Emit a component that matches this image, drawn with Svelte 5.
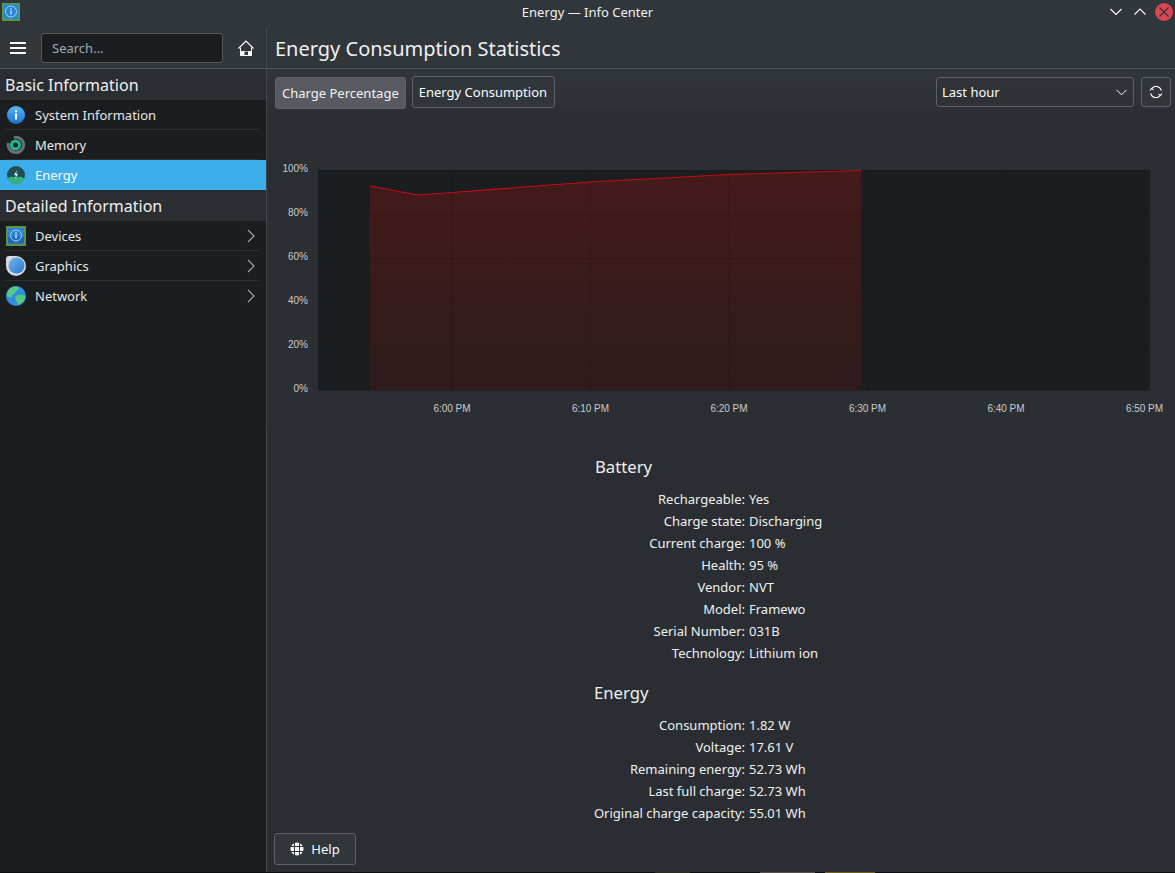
<script>
  const yTicks = [
    { y: 170, label: '100%' }, { y: 214, label: '80%' }, { y: 258, label: '60%' },
    { y: 302, label: '40%' }, { y: 346, label: '20%' }, { y: 390, label: '0%' }
  ];
  const xTicks = [
    { x: 452, label: '6:00 PM' }, { x: 590.5, label: '6:10 PM' }, { x: 729, label: '6:20 PM' },
    { x: 867.5, label: '6:30 PM' }, { x: 1006, label: '6:40 PM' }, { x: 1144.5, label: '6:50 PM' }
  ];
  const battery = [
    ['Rechargeable:', 'Yes'], ['Charge state:', 'Discharging'], ['Current charge:', '100 %'],
    ['Health:', '95 %'], ['Vendor:', 'NVT'], ['Model:', 'Framewo'],
    ['Serial Number:', '031B'], ['Technology:', 'Lithium ion']
  ];
  const energy = [
    ['Consumption:', '1.82 W'], ['Voltage:', '17.61 V'], ['Remaining energy:', '52.73 Wh'],
    ['Last full charge:', '52.73 Wh'], ['Original charge capacity:', '55.01 Wh']
  ];
  const line = '370,186 417.5,195 452,192.5 590,182 729,174.5 861,170.5';
</script>

<div class="window">
  <header class="titlebar">
    <svg class="appicon" width="20" height="20" viewBox="0 0 20 20">
      <rect x="1" y="1" width="18" height="18" fill="#5b9a3e" />
      <rect x="2.500" y="2.500" width="15" height="14.500" fill="#2c86d8" />
      <circle cx="10" cy="9.500" r="5.500" fill="none" stroke="#9fd4fa" />
      <rect x="9.400" y="8.500" width="1.300" height="4" fill="#cfe9fd" />
      <rect x="9.400" y="6.300" width="1.300" height="1.300" fill="#cfe9fd" />
    </svg>
    <span class="wintitle">Energy — Info Center</span>
    <div class="winbtns">
      <svg width="14" height="14" viewBox="0 0 14 14"><path d="M1.500 4 7 9.500 12.500 4" fill="none" stroke="#fcfcfc" stroke-width="1.100" /></svg>
      <svg width="14" height="14" viewBox="0 0 14 14"><path d="M1.500 9.500 7 4l5.500 5.500" fill="none" stroke="#fcfcfc" stroke-width="1.100" /></svg>
      <svg class="close" width="18" height="18" viewBox="0 0 18 18"><circle cx="9" cy="9" r="9" fill="#da4453" /><path d="M4.500 4.500l9 9M13.500 4.500l-9 9" stroke="#31363b" stroke-width="1.200" /></svg>
    </div>
  </header>

  <div class="body">
    <aside class="sidebar">
      <div class="toolbar">
        <svg width="16" height="12" viewBox="0 0 16 12"><path d="M0 1h16M0 6h16M0 11h16" stroke="#fcfcfc" stroke-width="2" /></svg>
        <div class="search">Search...</div>
        <svg class="home" width="16" height="16" viewBox="0 0 16 16">
          <path d="M.5 8.500 8 1l7.500 7.500" fill="none" stroke="#fcfcfc" stroke-width="1.200" />
          <path d="M2.500 7.500V15.500h11V7.500" fill="none" stroke="#fcfcfc" stroke-width="1" />
          <path d="M2.500 11h11v5h-3.500v-4.500H6.500V16H2.500z" fill="#fcfcfc" />
        </svg>
      </div>
      <div class="list">
        <div class="section">Basic Information</div>
        <div class="item">
          <svg width="20" height="20" viewBox="0 0 20 20">
            <defs><linearGradient id="blue" x1="0" y1="0" x2="0" y2="1"><stop offset="0" stop-color="#5cb8f6" /><stop offset="1" stop-color="#1a6fd0" /></linearGradient></defs>
            <circle cx="10" cy="10" r="9" fill="url(#blue)" />
            <rect x="9" y="8.500" width="2" height="6" fill="#fff" /><rect x="9" y="5.200" width="2" height="2" fill="#fff" />
          </svg>
          <span>System Information</span>
        </div>
        <div class="item">
          <svg width="20" height="20" viewBox="0 0 20 20">
            <path d="M8 2.500A7.700 7.700 0 1 1 2.500 8" fill="none" stroke="#6a6f74" stroke-width="3" />
            <circle cx="9.500" cy="10" r="4" fill="#1e2326" stroke="#1db894" stroke-width="3" />
          </svg>
          <span>Memory</span>
        </div>
        <div class="item selected">
          <svg width="20" height="20" viewBox="0 0 20 20">
            <circle cx="10" cy="10" r="9" fill="#1d4f55" />
            <path d="M1.700 13.500c3-3 5-1.500 8-1.500s5-1.500 8.600 1.500A9 9 0 0 1 1.700 13.500z" fill="#35b27a" />
            <path d="M11 5 8 10.200h2L9 14l3.200-5.200h-2z" fill="#e8f5e4" />
          </svg>
          <span>Energy</span>
        </div>
        <div class="section">Detailed Information</div>
        <div class="item">
          <svg width="20" height="20" viewBox="0 0 20 20">
            <rect width="20" height="20" fill="#5d9440" />
            <rect x="2" y="2" width="16" height="15.500" fill="#2b83d6" />
            <rect x="2" y="11" width="16" height="6.500" fill="#1f66b8" />
            <circle cx="10" cy="9.500" r="5.500" fill="none" stroke="#9fd4fa" />
            <rect x="9.300" y="8.500" width="1.400" height="4" fill="#cfe9fd" /><rect x="9.300" y="6.300" width="1.400" height="1.400" fill="#cfe9fd" />
          </svg>
          <span>Devices</span>
          <svg class="chev" width="8" height="14" viewBox="0 0 8 14"><path d="M1 1l6 6-6 6" fill="none" stroke="#a1a9b1" stroke-width="1.100" /></svg>
        </div>
        <div class="item">
          <svg width="20" height="20" viewBox="0 0 20 20">
            <defs><linearGradient id="gfx" x1="0" y1="0" x2="1" y2="1"><stop offset="0" stop-color="#6fb6ee" /><stop offset="1" stop-color="#2a78cf" /></linearGradient></defs>
            <path d="M3 0h7a10 10 0 0 1 0 20 10 10 0 0 1-10-10V3a3 3 0 0 1 3-3z" fill="#d5dade" />
            <circle cx="10.500" cy="9.500" r="8" fill="url(#gfx)" />
          </svg>
          <span>Graphics</span>
          <svg class="chev" width="8" height="14" viewBox="0 0 8 14"><path d="M1 1l6 6-6 6" fill="none" stroke="#a1a9b1" stroke-width="1.100" /></svg>
        </div>
        <div class="item">
          <svg width="20" height="20" viewBox="0 0 20 20">
            <circle cx="10" cy="10" r="10" fill="#2f8ede" />
            <path d="M5 1.500c3-1.500 7-1 8 .5-.5 2-2.500 2-3.500 4S6 9 5.500 11.500C3 12 1.200 10.500.5 8 1 5.500 3 3 5 1.500z" fill="#57c785" />
            <path d="M9.500 10c3-1.500 8-1.500 10 .5-.5 3.500-3.500 7.500-7 8.500-1.500-2.500-3.500-5.500-3-9z" fill="#57c785" />
          </svg>
          <span>Network</span>
          <svg class="chev" width="8" height="14" viewBox="0 0 8 14"><path d="M1 1l6 6-6 6" fill="none" stroke="#a1a9b1" stroke-width="1.100" /></svg>
        </div>
      </div>
    </aside>

    <main class="main">
      <div class="pagehead">Energy Consumption Statistics</div>
      <div class="content">
        <div class="controls">
          <button class="tab on">Charge Percentage</button>
          <button class="tab">Energy Consumption</button>
          <div class="spacer"></div>
          <div class="combo">
            <span>Last hour</span>
            <svg width="11" height="7" viewBox="0 0 11 7"><path d="M.5.800 5.500 5.800 10.500.8" fill="none" stroke="#fcfcfc" /></svg>
          </div>
          <button class="refresh" aria-label="Refresh">
            <svg width="14" height="14" viewBox="0 0 14 14" fill="none" stroke="#fcfcfc" stroke-width="1.100">
              <path d="M1.700 8.500A5.500 5.500 0 0 0 11.500 10.300" /><path d="M12.300 5.500A5.500 5.500 0 0 0 2.500 3.700" />
              <path d="M1 5.500l1.500-2 2 1.200M13 8.500l-1.500 2-2-1.200" />
            </svg>
          </button>
        </div>

        <svg class="chart" width="908" height="316" viewBox="267 110 908 316">
          <defs>
            <linearGradient id="area" x1="0" y1="0" x2="0" y2="1">
              <stop offset="0" stop-color="#451a1b" /><stop offset="1" stop-color="#2f1b1c" />
            </linearGradient>
          </defs>
          <rect x="318" y="170" width="832" height="220.500" fill="#1b1e20" />
          <polygon points="{line} 861,390 370,390" fill="url(#area)" />
          {#each yTicks as t}
            <path d="M318 {t.y + .5}H1150" stroke="#000" stroke-opacity=".1" />
            <text x="308" y={t.y + 2} text-anchor="end">{t.label}</text>
          {/each}
          {#each xTicks as t}
            <path d="M{t.x} 170V396" stroke="#000" stroke-opacity=".1" />
            <text x={t.x} y="412" text-anchor="middle">{t.label}</text>
          {/each}
          <polyline points={line} fill="none" stroke="#c80a10" stroke-width="1.100" />
        </svg>

        <div class="form">
          <div class="formhead">Battery</div>
          {#each battery as [k, v]}
            <div class="row"><span class="key">{k}</span><span>{v}</span></div>
          {/each}
          <div class="formhead second">Energy</div>
          {#each energy as [k, v]}
            <div class="row"><span class="key">{k}</span><span>{v}</span></div>
          {/each}
        </div>

        <div class="footer">
          <button class="help">
            <svg width="14" height="14" viewBox="0 0 14 14">
              <circle cx="7" cy="7" r="6.500" fill="#fcfcfc" />
              <path d="M4.500 0v14M9.500 0v14M0 4.500h14M0 9.500h14" stroke="#31363b" stroke-width="1" />
            </svg>
            Help
          </button>
        </div>
      </div>
    </main>
  </div>
  <div class="desktop"></div>
</div>

<style>
  :global(body) {
    margin: 0;
    background: #2a2e32;
  }
  .window {
    width: 1175px;
    height: 873px;
    display: flex;
    flex-direction: column;
    overflow: hidden;
    font-family: "Noto Sans", sans-serif;
    font-size: 13px;
    color: #fcfcfc;
    background: #2a2e32;
  }
  .titlebar {
    height: 27px;
    flex: none;
    background: #31363b;
    display: flex;
    align-items: center;
    justify-content: center;
    position: relative;
  }
  .appicon {
    position: absolute;
    left: 1px;
    top: 2px;
  }
  .wintitle {
    font-size: 13px;
    color: #eff0f1;
    position: relative;
    top: -2px;
  }
  .winbtns {
    position: absolute;
    right: 2px;
    top: 3px;
    display: flex;
    align-items: center;
    gap: 10px;
  }
  .close {
    margin-left: -2px;
  }
  .body {
    flex: 1;
    display: flex;
    min-height: 0;
  }
  .desktop {
    height: 1px;
    flex: none;
    background: linear-gradient(90deg, #0c0d0e 0 655px, #2b2a1a 655px 690px, #0c0d0e 690px 760px, #55504a 760px 815px, #0c0d0e 815px 825px, #6f5f1c 825px 875px, #0c0d0e 875px);
  }
  .sidebar {
    width: 266px;
    flex: none;
    display: flex;
    flex-direction: column;
    border-right: 1px solid #41484d;
  }
  .toolbar {
    height: 42px;
    flex: none;
    box-sizing: border-box;
    background: #31363b;
    border-bottom: 1px solid #4d5659;
    display: flex;
    align-items: center;
    padding: 1px 12px 0 10px;
  }
  .search {
    width: 182px;
    height: 30px;
    box-sizing: border-box;
    margin-left: 15px;
    padding-left: 10px;
    line-height: 28px;
    background: #1b1e20;
    border: 1px solid #53585d;
    border-radius: 3px;
    color: #a1a9b1;
  }
  .home {
    margin-left: 15px;
  }
  .list {
    flex: 1;
    background: #1b1e20;
  }
  .section {
    height: 31px;
    box-sizing: border-box;
    padding: 3px 0 0 5px;
    font-size: 16px;
    line-height: 26px;
    background: #2a2e32;
    color: #eff0f1;
  }
  .item {
    height: 30px;
    display: flex;
    align-items: center;
    position: relative;
    padding-left: 6px;
    color: #e3e5e7;
  }
  .item::after {
    content: "";
    position: absolute;
    left: 5px;
    right: 7px;
    bottom: 0;
    height: 1px;
    background: #2c3034;
  }
  .item:last-child::after,
  .selected::after {
    display: none;
  }
  .item span {
    margin-left: 9px;
  }
  .selected {
    background: #3daee9;
    color: #fcfcfc;
  }
  .chev {
    position: absolute;
    right: 11px;
    top: 8px;
  }
  .main {
    flex: 1;
    min-width: 0;
    display: flex;
    flex-direction: column;
  }
  .pagehead {
    height: 42px;
    flex: none;
    box-sizing: border-box;
    background: #31363b;
    border-bottom: 1px solid #4d5659;
    padding-left: 8px;
    font-size: 20px;
    line-height: 43px;
    color: #eff0f1;
  }
  .content {
    flex: 1;
    display: flex;
    flex-direction: column;
    min-height: 0;
  }
  .controls {
    height: 41px;
    flex: none;
    box-sizing: border-box;
    display: flex;
    align-items: flex-start;
    background: linear-gradient(#31363b, #2d3136);
    padding: 7px 4px 0 8px;
  }
  button {
    font: inherit;
    color: #fcfcfc;
    background: #31363b;
    border: 1px solid #5f6265;
    border-radius: 3px;
    padding: 0;
  }
  .tab {
    height: 32px;
    padding: 0 7px 0 6px;
    margin-right: 6px;
  }
  .tab.on {
    background: #575b60;
    margin-top: 1px;
    height: 32px;
    padding: 0 6px;
    color: #f2f3f4;
  }
  .spacer {
    flex: 1;
  }
  .combo {
    width: 198px;
    height: 30px;
    box-sizing: border-box;
    border: 1px solid #5f6265;
    border-radius: 3px;
    display: flex;
    align-items: center;
    justify-content: space-between;
    padding: 0 6px 0 5px;
    margin: 1px 7px 0 0;
  }
  .refresh {
    width: 30px;
    height: 30px;
    margin-top: 1px;
    display: flex;
    align-items: center;
    justify-content: center;
  }
  .chart {
    display: block;
    flex: none;
    background: #2b2f33;
  }
  .chart text {
    font-family: "Liberation Sans", sans-serif;
    font-size: 10px;
    fill: #c9cbcd;
  }
  .form {
    flex: 1;
    display: flex;
    flex-direction: column;
    min-height: 0;
  }
  .formhead {
    font-size: 16.700px;
    line-height: 24px;
    margin: 29px 0 9px 328px;
    color: #eff0f1;
  }
  .formhead.second {
    margin: 17px 0 9px 327px;
  }
  .row {
    height: 22px;
    line-height: 22px;
    display: flex;
    color: #eff0f1;
  }
  .key {
    width: 478px;
    text-align: right;
    margin-right: 4px;
  }
  .footer {
    height: 39px;
    flex: none;
    padding-left: 7px;
  }
  .help {
    width: 82px;
    height: 32px;
    display: flex;
    align-items: center;
    justify-content: center;
    gap: 7px;
  }
</style>
